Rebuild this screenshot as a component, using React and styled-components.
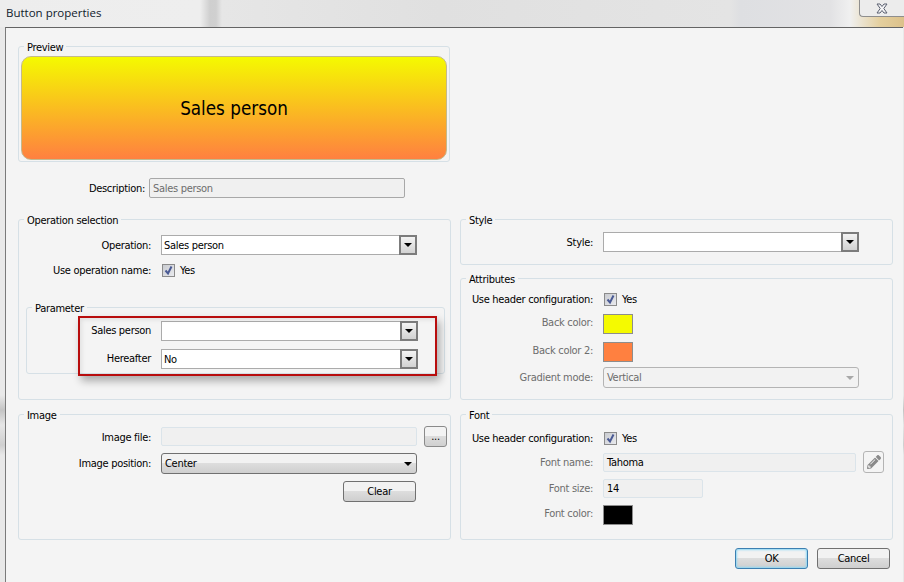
import React from 'react';
import styled, { createGlobalStyle } from 'styled-components';
import { FaPencilAlt } from 'react-icons/fa';

const GlobalStyle = createGlobalStyle`
    html, body {
        margin: 0;
        padding: 0;
        background: #e4e4e4;
    }
    body {
        font-family: "DejaVu Sans", "Liberation Sans", sans-serif;
        font-stretch: condensed;
        font-size: 11px;
        letter-spacing: -0.3px;
        color: #000;
        overflow: hidden;
    }
`;

function Field({ label, muted, width = 132, up = 0, down = 0, children }) {
    return (
        <FieldRow>
            <FieldLabel $muted={muted} $width={width} $up={up} $down={down}>{label}</FieldLabel>
            {children}
        </FieldRow>
    );
}

function Combo({ value, width = 256 }) {
    return (
        <ComboBox $width={width}>
            <ComboValue>{value}</ComboValue>
            <ComboButton>
                <Arrow />
            </ComboButton>
        </ComboBox>
    );
}

function Check() {
    return (
        <CheckRow>
            <CheckBox>
                <svg width="11" height="11" viewBox="0 0 11 11">
                    <path d="M2.5 5.5 L5 8.5 L8.5 1.5" fill="none" stroke="#4a5a94" strokeWidth="2" />
                </svg>
            </CheckBox>
            <span>Yes</span>
        </CheckRow>
    );
}

function App() {
    return (
        <>
            <GlobalStyle />
            <Page>
                <TitleBar>
                    <Title>Button properties</Title>
                    <CloseButton>
                        <svg width="12" height="11" viewBox="0 0 12 11">
                            <path
                                d="M1 1 H4 L6 3.5 L8 1 H11 L7.8 5.5 L11 10 H8 L6 7.5 L4 10 H1 L4.2 5.5 Z"
                                fill="#f4f4f6"
                                stroke="#5b6070"
                                strokeWidth="1"
                            />
                        </svg>
                    </CloseButton>
                </TitleBar>

                <Dialog>
                    <Group $width={432} $height={116} $pad="9px 2px 0">
                        <Legend>Preview</Legend>
                        <PreviewButton>Sales person</PreviewButton>
                    </Group>

                    <DescriptionRow>
                        <FieldLabel $width={127}>Description:</FieldLabel>
                        <TextBox $width={256} $height={20} $grey>Sales person</TextBox>
                    </DescriptionRow>

                    <Columns>
                        <Column>
                            <Group $height={181} $pad="15px 0 0">
                                <Legend>Operation selection</Legend>
                                <Field label="Operation:">
                                    <Combo value="Sales person" />
                                </Field>
                                <Gap $h={7} />
                                <Field label="Use operation name:">
                                    <Check />
                                </Field>
                                <ParameterGroup>
                                    <Legend>Parameter</Legend>
                                    <Field label="Sales person" width={124} up={2}>
                                        <Combo value="" width={257} />
                                    </Field>
                                    <Gap $h={8} />
                                    <Field label="Hereafter" width={124} up={2}>
                                        <Combo value="No" width={257} />
                                    </Field>
                                    <Highlight />
                                </ParameterGroup>
                            </Group>

                            <Group $height={126} $pad="11px 0 0" $mt={1}>
                                <Legend>Image</Legend>
                                <FileRow>
                                    <Field label="Image file:" down={2}>
                                        <TextBox $width={256} $height={19} $light />
                                    </Field>
                                    <BrowseButton>...</BrowseButton>
                                </FileRow>
                                <Gap $h={6} />
                                <Field label="Image position:">
                                    <AeroSelect>
                                        Center
                                        <Arrow />
                                    </AeroSelect>
                                </Field>
                                <ClearRow>
                                    <AeroButton $width={73}>Clear</AeroButton>
                                </ClearRow>
                            </Group>
                        </Column>

                        <Column>
                            <Group $height={46} $pad="12px 0 0">
                                <Legend>Style</Legend>
                                <Field label="Style:">
                                    <Combo value="" />
                                </Field>
                            </Group>

                            <Group $height={122} $pad="12px 0 0">
                                <Legend>Attributes</Legend>
                                <Field label="Use header configuration:">
                                    <Check />
                                </Field>
                                <Gap $h={7} />
                                <Field label="Back color:" muted up={4}>
                                    <Swatch $color="#f5fa00" />
                                </Field>
                                <Gap $h={8} />
                                <Field label="Back color 2:" muted up={4}>
                                    <Swatch $color="#ff8040" />
                                </Field>
                                <Gap $h={5} />
                                <Field label="Gradient mode:" muted>
                                    <DisabledSelect>
                                        Vertical
                                        <Arrow $muted />
                                    </DisabledSelect>
                                </Field>
                            </Group>

                            <Group $height={126} $pad="15px 0 0" $mt={1}>
                                <Legend>Font</Legend>
                                <Field label="Use header configuration:">
                                    <Check />
                                </Field>
                                <Gap $h={5} />
                                <FileRow>
                                    <Field label="Font name:" muted>
                                        <TextBox $width={253} $height={19} $light $dark>Tahoma</TextBox>
                                    </Field>
                                    <PencilButton>
                                        <FaPencilAlt size={14} color="#8a8a8a" />
                                    </PencilButton>
                                </FileRow>
                                <Gap $h={6} />
                                <Field label="Font size:" muted>
                                    <TextBox $width={100} $height={19} $light $dark>14</TextBox>
                                </Field>
                                <Gap $h={7} />
                                <Field label="Font color:" muted up={4}>
                                    <Swatch $color="#000" />
                                </Field>
                            </Group>
                        </Column>
                    </Columns>

                    <Footer>
                        <AeroButton $width={73} $primary>OK</AeroButton>
                        <AeroButton $width={73}>Cancel</AeroButton>
                    </Footer>
                </Dialog>
            </Page>
        </>
    );
}

export default App;

const Page = styled.div`
    width: 904px;
    height: 582px;
    display: flex;
    flex-direction: column;
    overflow: hidden;
    background: linear-gradient(180deg, #e9e9e9 0 395px, #c4c4c4 410px, #e6e6e6 425px, #cfcfcf 445px, #e8e8e8 455px);
`;

const TitleBar = styled.div`
    height: 27px;
    flex: none;
    display: flex;
    justify-content: space-between;
    background: linear-gradient(
        90deg,
        #ededed 0,
        #eeeeee 200px,
        #cfcfcf 210px,
        #d0d0d0 216px,
        #e6e6e6 222px,
        #e0e0e0 440px,
        #e4e4e4 730px,
        #dedfe2 740px,
        #e2e2e4 830px,
        #f0f0f0 850px,
        #e4cf9e 880px,
        #dcc18a 904px
    );
`;

const Title = styled.div`
    padding: 5px 0 0 6px;
    font-family: "Open Sans", "Liberation Sans", sans-serif;
    font-stretch: normal;
    font-size: 11.5px;
    letter-spacing: 0;
    color: #10202c;
`;

const CloseButton = styled.div`
    width: 45px;
    height: 17px;
    box-sizing: border-box;
    display: flex;
    align-items: center;
    justify-content: center;
    background: #ececec;
    border: 1px solid #8e8e8e;
    border-top: none;
    border-right: none;
    border-radius: 0 0 0 4px;
`;

const Dialog = styled.div`
    flex: 1;
    margin-left: 5px;
    margin-right: 1px;
    box-sizing: border-box;
    padding: 18px 10px 0 12px;
    background: #f4f4f4;
    border-top: 1px solid #646464;
    border-left: 1px solid #7a7a7a;
`;

const Group = styled.div`
    position: relative;
    box-sizing: border-box;
    width: ${(p) => (p.$width ? `${p.$width}px` : 'auto')};
    height: ${(p) => p.$height}px;
    margin-top: ${(p) => p.$mt || 0}px;
    padding: ${(p) => p.$pad};
    border: 1px solid #d6e0e6;
    border-radius: 3px;
`;

const ParameterGroup = styled.div`
    position: relative;
    box-sizing: border-box;
    height: 67px;
    margin: 29px 5px 0 7px;
    padding: 13px 0 0;
    border: 1px solid #d6e0e6;
    border-radius: 3px;
`;

const Legend = styled.div`
    position: absolute;
    top: -7px;
    left: 5px;
    padding: 0 3px;
    line-height: 15px;
    background: #f4f4f4;
    white-space: nowrap;
`;

const PreviewButton = styled.div`
    height: 104px;
    display: flex;
    align-items: center;
    justify-content: center;
    box-sizing: border-box;
    border: 1px solid #c4b98c;
    border-radius: 10px;
    background: linear-gradient(180deg, #f5fa00, #ff8040);
    font-size: 18.7px;
    letter-spacing: 0;
    color: #000;
`;

const DescriptionRow = styled.div`
    display: flex;
    align-items: center;
    gap: 4px;
    height: 20px;
    margin-top: 16px;
`;

const Columns = styled.div`
    display: grid;
    grid-template-columns: 433px 433px;
    gap: 9px;
    margin-top: 21px;
`;

const Column = styled.div`
    display: flex;
    flex-direction: column;
    gap: 13px;
`;

const FieldRow = styled.div`
    display: flex;
    align-items: center;
    gap: 10px;
`;

const FieldLabel = styled.div`
    width: ${(p) => p.$width}px;
    flex: none;
    padding: ${(p) => p.$down || 0}px 0 ${(p) => p.$up || 0}px;
    text-align: right;
    white-space: nowrap;
    color: ${(p) => (p.$muted ? '#6d6d6d' : '#000')};
`;

const Gap = styled.div`
    height: ${(p) => p.$h}px;
`;

const ComboBox = styled.div`
    width: ${(p) => p.$width}px;
    height: 20px;
    box-sizing: border-box;
    display: flex;
    justify-content: space-between;
    background: #fff;
    border: 1px solid #ababab;
    border-right: none;
`;

const ComboValue = styled.div`
    padding-left: 2px;
    line-height: 19px;
`;

const ComboButton = styled.div`
    width: 18px;
    margin: -1px 0;
    box-sizing: border-box;
    display: flex;
    align-items: center;
    justify-content: center;
    border: 2px solid #7c7c7c;
    background: linear-gradient(180deg, #f3f3f3, #d2d2d2);
`;

const Arrow = styled.span`
    width: 0;
    height: 0;
    border-left: 4px solid transparent;
    border-right: 4px solid transparent;
    border-top: 4px solid ${(p) => (p.$muted ? '#a8a8a8' : '#000')};
`;

const CheckRow = styled.div`
    height: 16px;
    display: flex;
    align-items: center;
    gap: 5px;
    margin-left: 1px;
`;

const CheckBox = styled.div`
    width: 13px;
    height: 13px;
    box-sizing: border-box;
    display: flex;
    align-items: center;
    justify-content: center;
    border: 1px solid #8b8b8b;
    background: linear-gradient(135deg, #c9cbd0, #e9eaee);
`;

const TextBox = styled.div`
    width: ${(p) => p.$width}px;
    height: ${(p) => p.$height}px;
    box-sizing: border-box;
    padding-left: 3px;
    line-height: ${(p) => p.$height - 1}px;
    background: #f0f0f0;
    border: 1px solid ${(p) => (p.$grey ? '#a8a8a8' : '#dbe4ea')};
    border-radius: 2px;
    color: ${(p) => (p.$dark ? '#000' : '#6d6d6d')};
`;

const FileRow = styled.div`
    position: relative;
    display: flex;
    align-items: center;
    gap: 7px;
`;

const BrowseButton = styled.div`
    width: 23px;
    height: 21px;
    box-sizing: border-box;
    text-align: center;
    line-height: 20px;
    border: 1px solid #8a8a8a;
    border-radius: 3px;
    background: linear-gradient(180deg, #f3f3f3 0 50%, #dcdcdc 50%, #d0d0d0);
`;

const PencilButton = styled.div`
    width: 21px;
    height: 22px;
    box-sizing: border-box;
    display: flex;
    align-items: center;
    justify-content: center;
    border: 1px solid #b4b4b4;
    border-radius: 3px;
    background: #f4f4f4;
`;

const AeroSelect = styled.div`
    width: 256px;
    height: 21px;
    box-sizing: border-box;
    display: flex;
    align-items: center;
    justify-content: space-between;
    padding: 0 4px 0 3px;
    border: 1px solid #707070;
    border-radius: 3px;
    background: linear-gradient(180deg, #f2f2f2 0 45%, #dddddd 50%, #cfcfcf);
`;

const DisabledSelect = styled(AeroSelect)`
    color: #6d6d6d;
    border-color: #b4b4b4;
    background: #f2f2f2;
`;

const ClearRow = styled.div`
    display: flex;
    justify-content: flex-end;
    margin: 7px 34px 0 0;
`;

const AeroButton = styled.div`
    width: ${(p) => p.$width}px;
    height: 21px;
    box-sizing: border-box;
    text-align: center;
    line-height: 19px;
    border: 1px solid ${(p) => (p.$primary ? '#3c7fb1' : '#707070')};
    border-radius: 3px;
    background: linear-gradient(180deg, #f2f2f2 0 45%, #dddddd 50%, #cfcfcf);
    box-shadow: ${(p) => (p.$primary ? 'inset 0 0 2px 1px #8fd8f5' : 'none')};
`;

const Swatch = styled.div`
    width: 30px;
    height: 20px;
    box-sizing: border-box;
    border: 1px solid #8d8d8d;
    background: ${(p) => p.$color};
`;

const Footer = styled.div`
    display: flex;
    justify-content: flex-end;
    gap: 9px;
    margin: 8px 3px 0 0;
`;

const Highlight = styled.div`
    position: absolute;
    left: 51px;
    top: 8px;
    width: 359px;
    height: 60px;
    box-sizing: border-box;
    border: 2px solid #b80d0d;
    box-shadow: 3px 5px 8px rgba(0, 0, 0, 0.3), inset 2px 2px 4px rgba(0, 0, 0, 0.08);
`;
